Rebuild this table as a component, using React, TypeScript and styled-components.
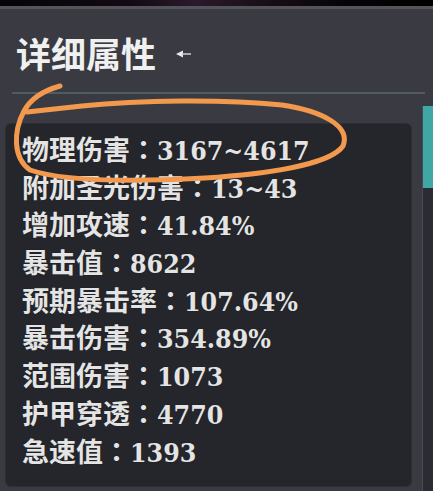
import styled, { createGlobalStyle } from 'styled-components';

// Detail stats panel with a hand-drawn highlight over the first row.

const Global = createGlobalStyle`
  html, body {
    margin: 0;
    padding: 0;
    background: #3a3b42;
  }
  #root {
    width: 433px;
    height: 491px;
    overflow: hidden;
  }
`;

const Page = styled.div`
  position: relative;
  width: 433px;
  height: 491px;
  background: #3a3b42;
  display: flex;
  flex-direction: column;
  font-family: 'DejaVu Serif', 'Noto Sans CJK SC', serif;
`;

const TopStrip = styled.div`
  height: 6px;
  background: linear-gradient(90deg, #050307 0%, #120a14 30%, #2a1a2c 45%, #1a1018 60%, #050306 80%, #000 100%);
  border-bottom: 3px solid #55545b;
`;

const Header = styled.div`
  height: 83px;
  display: flex;
  align-items: center;
  gap: 20px;
  padding-left: 16px;
  padding-top: 3px;
  box-sizing: border-box;
`;

const Title = styled.h1`
  margin: 0;
  font-family: 'Noto Sans CJK SC', sans-serif;
  font-weight: 700;
  font-size: 35px;
  color: #f0f0f0;
  line-height: 1;
`;

const Divider = styled.div`
  height: 2px;
  margin: 0 8px 0 12px;
  background: #525a63;
`;

const Body = styled.div`
  flex: 1;
  display: flex;
  gap: 10px;
  padding-left: 5px;
  padding-top: 12px;
`;

const StatBox = styled.div`
  width: 407px;
  margin-top: 17px;
  margin-bottom: 4px;
  box-sizing: border-box;
  background: #25262c;
  border: 1px solid #2e2f35;
  border-radius: 6px;
  padding: 6px 0 0 16px;
`;

const SideColumn = styled.div`
  flex: 1;
  display: flex;
  flex-direction: column;
  border-left: 1px solid #4a4b52;
  background: #2b2c32;
`;

const SideTab = styled.div`
  height: 82px;
  background: #3fa8a5;
`;

const Row = styled.div`
  height: 37.7px;
  line-height: 37.7px;
  font-size: 27px;
  font-weight: 700;
  color: #e4e4e4;
  white-space: nowrap;
  text-shadow: 0 0 1px rgba(0, 0, 0, 0.6);
`;

const Label = styled.span`
  font-family: 'Noto Sans CJK SC', sans-serif;
  font-weight: 700;
`;

const Colon = styled.span`
  font-family: 'Noto Sans CJK TC', sans-serif;
  font-weight: 700;
`;

const Value = styled.span`
  font-family: 'DejaVu Serif Condensed', 'DejaVu Serif', serif;
  font-stretch: condensed;
  font-weight: 700;
  font-size: 26.5px;
`;

const Overlay = styled.svg`
  position: absolute;
  left: 0;
  top: 0;
  pointer-events: none;
`;

const stats: [string, string][] = [
  ['物理伤害', '3167~4617'],
  ['附加圣光伤害', '13~43'],
  ['增加攻速', '41.84%'],
  ['暴击值', '8622'],
  ['预期暴击率', '107.64%'],
  ['暴击伤害', '354.89%'],
  ['范围伤害', '1073'],
  ['护甲穿透', '4770'],
  ['急速值', '1393'],
];

function BackArrow(): JSX.Element {
  return (
    <svg width="16" height="10" viewBox="0 0 16 10" style={{ marginTop: 4 }}>
      <path d="M0 5 L7 1.5 L7 8.5 Z" fill="#e8e8ee" />
      <rect x="6" y="4.2" width="9" height="1.6" fill="#c8c8d0" />
    </svg>
  );
}

export default function App(): JSX.Element {
  return (
    <Page>
      <Global />
      <TopStrip />
      <Header>
        <Title>详细属性</Title>
        <BackArrow />
      </Header>
      <Divider />
      <Body>
        <StatBox>
          {stats.map(([label, value]) => (
            <Row key={label}>
              <Label>{label}</Label>
              <Colon>：</Colon>
              <Value>{value}</Value>
            </Row>
          ))}
        </StatBox>
        <SideColumn>
          <SideTab />
        </SideColumn>
      </Body>
      <Overlay width="433" height="491" viewBox="0 0 433 491">
        <path
          d="M60 86 C42 91 30 100 24 111 C13 132 13 158 30 170 C62 181 130 182 205 178 C265 174 330 165 343 146 C351 126 322 111 282 105 C222 99 140 100 82 106 L27 112"
          fill="none"
          stroke="#f2994d"
          strokeWidth="5"
          strokeLinecap="round"
          strokeLinejoin="round"
        />
      </Overlay>
    </Page>
  );
}
